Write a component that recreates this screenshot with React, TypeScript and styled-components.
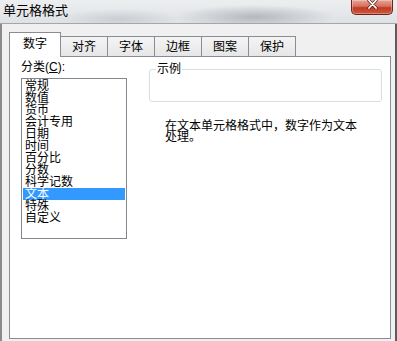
import React from 'react';
import styled, { createGlobalStyle } from 'styled-components';

const GlobalStyle = createGlobalStyle`
  html, body {
    margin: 0;
    padding: 0;
    background: #f0f0f0;
  }
  body {
    font-family: "Liberation Sans", "Noto Sans CJK SC", sans-serif;
    font-size: 12px;
    color: #000;
  }
`;

const Window = styled.div`
  width: 397px;
  height: 341px;
  display: flex;
  flex-direction: column;
  overflow: hidden;
`;

const TitleBar = styled.div`
  height: 23px;
  flex: none;
  display: flex;
  justify-content: space-between;
  align-items: flex-start;
  padding: 0 4px 0 3px;
  border-bottom: 1px solid #a3a6aa;
  background:
    radial-gradient(ellipse 80px 12px at 255px 17px, rgba(176, 180, 186, 0.9), rgba(176, 180, 186, 0)),
    radial-gradient(ellipse 60px 10px at 120px 19px, rgba(196, 200, 205, 0.8), rgba(196, 200, 205, 0)),
    linear-gradient(180deg, #eceef0 0%, #dfe2e5 100%);
`;

const Title = styled.span`
  margin-top: 4px;
  font-size: 13px;
  line-height: 13px;
`;

const CloseButton = styled.div`
  width: 42px;
  height: 15px;
  box-sizing: border-box;
  display: flex;
  justify-content: center;
  align-items: flex-start;
  border: 1px solid #6e2216;
  border-top: none;
  border-radius: 0 0 5px 5px;
  background: linear-gradient(180deg, #e7a497 0%, #d56f5d 45%, #c13a22 55%, #cc5840 100%);
  box-shadow: inset 0 0 0 1px rgba(255, 255, 255, 0.3);
`;

const Body = styled.div`
  flex: 1;
  display: flex;
  flex-direction: column;
  padding: 8px 4px 2px 7px;
  background: #f0f0f0;
  border-left: 2px solid #8a8a8a;
  border-right: 2px solid #5c5c5c;
`;

const TabStrip = styled.div`
  height: 25px;
  display: flex;
  align-items: flex-end;
  margin-bottom: -1px;
  position: relative;
  z-index: 1;
`;

const Tab = styled.div<{ $active?: boolean }>`
  box-sizing: border-box;
  width: ${p => (p.$active ? '52px' : '48px')};
  height: ${p => (p.$active ? '25px' : '20px')};
  margin-left: ${p => (p.$active ? '0' : '-1px')};
  margin-bottom: ${p => (p.$active ? '0' : '1px')};
  display: flex;
  justify-content: center;
  align-items: ${p => (p.$active ? 'flex-start' : 'center')};
  padding-top: ${p => (p.$active ? '5px' : '0')};
  font-size: 12px;
  line-height: 12px;
  border: 1px solid #898c95;
  border-bottom: none;
  background: ${p => (p.$active ? '#fff' : 'linear-gradient(180deg, #f4f4f4 0%, #e6e6e6 100%)')};
`;

const Panel = styled.div`
  flex: 1;
  display: flex;
  align-items: flex-start;
  padding: 4px 0 0 11px;
  background: #fff;
  border: 1px solid #898c95;
`;

const LeftColumn = styled.div`
  width: 106px;
  display: flex;
  flex-direction: column;
`;

const Label = styled.div`
  height: 12px;
  line-height: 12px;
  margin-bottom: 5px;
`;

const List = styled.div`
  height: 161px;
  box-sizing: border-box;
  border: 1px solid #828790;
  padding: 1px 1px 0;
`;

const Item = styled.div<{ $selected?: boolean }>`
  height: 12px;
  line-height: 12px;
  padding-left: 2px;
  white-space: nowrap;
  background: ${p => (p.$selected ? '#3399ff' : 'transparent')};
  color: ${p => (p.$selected ? '#fff' : '#000')};
`;

const RightColumn = styled.div`
  margin-left: 22px;
  width: 233px;
  padding-top: 2px;
`;

const Sample = styled.fieldset`
  margin: 0;
  padding: 0 0 0 6px;
  min-width: 0;
  box-sizing: border-box;
  width: 233px;
  border: 1px solid #d5dfe5;
  border-radius: 3px;
`;

const Legend = styled.legend`
  padding: 0 1px;
  font-size: 12px;
  line-height: 12px;
`;

const SampleBody = styled.div`
  height: 26px;
`;

const Description = styled.p`
  margin: 19px 0 0 16px;
  width: 196px;
  line-height: 11px;
`;

const categories = ['常规', '数值', '货币', '会计专用', '日期', '时间', '百分比', '分数', '科学记数', '文本', '特殊', '自定义'];
const tabs = ['数字', '对齐', '字体', '边框', '图案', '保护'];

const App: React.FC = () => {
  return (
    <Window>
      <GlobalStyle />
      <TitleBar>
        <Title>单元格格式</Title>
        <CloseButton>
          <svg width="11" height="9" viewBox="0 0 11 9">
            <path d="M2 0.5 L9 8 M9 0.5 L2 8" stroke="#5a1a10" strokeWidth="3.2" strokeLinecap="round" />
            <path d="M2 0.5 L9 8 M9 0.5 L2 8" stroke="#fff" strokeWidth="1.8" strokeLinecap="round" />
          </svg>
        </CloseButton>
      </TitleBar>
      <Body>
        <TabStrip>
          {tabs.map((t, i) => (
            <Tab key={t} $active={i === 0}>{t}</Tab>
          ))}
        </TabStrip>
        <Panel>
          <LeftColumn>
            <Label>分类(<u>C</u>):</Label>
            <List>
              {categories.map(c => (
                <Item key={c} $selected={c === '文本'}>{c}</Item>
              ))}
            </List>
          </LeftColumn>
          <RightColumn>
            <Sample>
              <Legend>示例</Legend>
              <SampleBody />
            </Sample>
            <Description>在文本单元格格式中，数字作为文本处理。</Description>
          </RightColumn>
        </Panel>
      </Body>
    </Window>
  );
};

export default App;
